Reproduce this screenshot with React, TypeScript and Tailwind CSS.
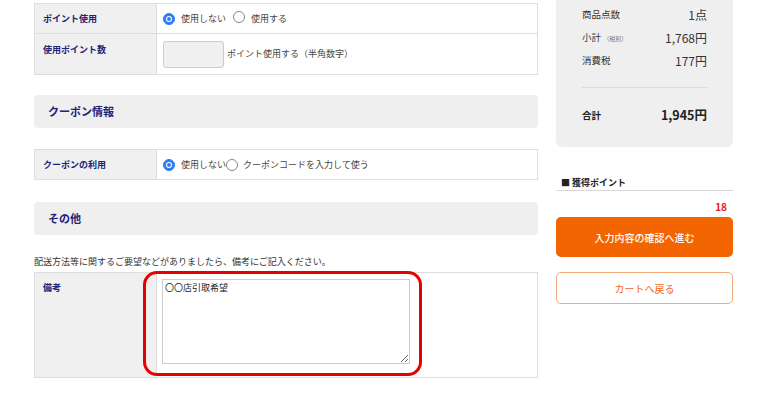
const navy = "text-[#222277]";

const Radio = ({ checked }: { checked?: boolean }) => (
    <span
        className={
            checked
                ? "inline-flex items-center justify-center w-[12px] h-[12px] rounded-full bg-[#2f7df6] border border-[#2f7df6]"
                : "inline-block w-[12px] h-[12px] rounded-full bg-white border border-[#888]"
        }
    >
        {checked && <span className="w-[6px] h-[6px] rounded-full bg-white flex items-center justify-center"><span className="w-[4px] h-[4px] rounded-full bg-[#2f7df6]" /></span>}
    </span>
);

const SectionHeader = ({ title }: { title: string }) => (
    <div className="h-[33px] bg-[#efefef] rounded-[4px] flex items-center pl-[14px]">
        <h2 className={`text-[11px] font-bold ${navy}`}>{title}</h2>
    </div>
);

const App = () => {
    return (
        <div
            className="w-[770px] h-[400px] bg-white overflow-hidden flex gap-[18px] pl-[34px] text-[#333]"
            style={{ fontFamily: '"Noto Sans CJK JP", "Noto Sans", sans-serif' }}
        >
            <div className="w-[504px] pt-[3px]">
                {/* points */}
                <div className="border border-[#dddddd]">
                    <div className="flex h-[30px] border-b border-[#dddddd]">
                        <div className={`w-[122px] bg-[#f0f0f0] border-r border-[#dddddd] pl-[8px] flex items-center text-[9px] font-bold ${navy}`}>
                            ポイント使用
                        </div>
                        <div className="flex-1 flex items-center pl-[6px] text-[9px] text-[#444]">
                            <Radio checked />
                            <span className="ml-[6px]">使用しない</span>
                            <span className="ml-[7px]"><Radio /></span>
                            <span className="ml-[6px]">使用する</span>
                        </div>
                    </div>
                    <div className="flex h-[40px]">
                        <div className={`w-[122px] bg-[#f0f0f0] border-r border-[#dddddd] pl-[8px] pt-[9px] text-[9px] font-bold ${navy}`}>
                            使用ポイント数
                        </div>
                        <div className="flex-1 flex items-center pl-[6px] text-[9px] text-[#444]">
                            <input className="w-[61px] h-[27px] bg-[#f0f0f0] border border-[#cccccc] rounded-[3px]" />
                            <span className="ml-[3px]">ポイント使用する（半角数字）</span>
                        </div>
                    </div>
                </div>

                <div className="mt-[20px]">
                    <SectionHeader title="クーポン情報" />
                </div>

                <div className="mt-[21px] border border-[#dddddd]">
                    <div className="flex h-[29px]">
                        <div className={`w-[122px] bg-[#f0f0f0] border-r border-[#dddddd] pl-[8px] flex items-center text-[9px] font-bold ${navy}`}>
                            クーポンの利用
                        </div>
                        <div className="flex-1 flex items-center pl-[6px] text-[9px] text-[#444]">
                            <Radio checked />
                            <span className="ml-[6px]">使用しない</span>
                            <Radio />
                            <span className="ml-[5px]">クーポンコードを入力して使う</span>
                        </div>
                    </div>
                </div>

                <div className="mt-[22px]">
                    <SectionHeader title="その他" />
                </div>

                <p className="mt-[20px] text-[9px] leading-[14px] text-[#333]">
                    配送方法等に関するご要望などがありましたら、備考にご記入ください。
                </p>

                <div className="mt-[3px] border border-[#dddddd] flex h-[106px]">
                    <div className={`w-[122px] bg-[#f0f0f0] border-r border-[#dddddd] pl-[8px] pt-[8px] text-[9px] font-bold ${navy}`}>
                        備考
                    </div>
                    <div className="flex-1 pl-[5px] pt-[6px]">
                        <div className="relative w-[248px] h-[85px]">
                            <textarea
                                defaultValue="〇〇店引取希望"
                                className="w-full h-full border border-[#cccccc] bg-white text-[9px] leading-[13px] text-[#222] px-[2px] py-[1px] resize"
                            />
                            <div className="absolute left-[-19px] top-[-8px] right-[-12px] bottom-[-12px] border-[3px] border-[#e60000] rounded-[14px]" />
                        </div>
                    </div>
                </div>
            </div>

            {/* summary */}
            <div className="w-[177px]">
                <div className="h-[147px] bg-[#efefef] rounded-b-[6px] px-[26px] pt-[5px] text-[9.5px] text-[#333]">
                    <div className="flex justify-between items-center h-[19px]">
                        <span>商品点数</span>
                        <span className="text-[12px]">1点</span>
                    </div>
                    <div className="flex justify-between items-center h-[23px] mt-[2px]">
                        <span>小計 <span className="text-[6px] text-[#777]">（税別）</span></span>
                        <span className="text-[12px]">1,768円</span>
                    </div>
                    <div className="flex justify-between items-center h-[23px]">
                        <span>消費税</span>
                        <span className="text-[12px]">177円</span>
                    </div>
                    <div className="mt-[15px] border-t border-[#dcdcdc]" />
                    <div className="flex justify-between items-center h-[22px] mt-[16px] font-bold text-[#222]">
                        <span>合計</span>
                        <span className="text-[12.5px]">1,945円</span>
                    </div>
                </div>

                <div className="mt-[30px] pl-[5px] pb-[1px] border-b border-[#d8d8d8] text-[9px] font-bold text-[#222] leading-[12px]">
                    ■ 獲得ポイント
                </div>
                <div className="text-right pr-[6px] mt-[10px] text-[10px] font-bold text-[#e02020] leading-[12px]">18</div>
                <button className="mt-[4px] w-full h-[40px] rounded-[5px] bg-[#f26500] text-white text-[10px] font-medium">
                    入力内容の確認へ進む
                </button>
                <button className="mt-[15px] w-full h-[32px] rounded-[5px] bg-white border border-[#f5a878] text-[#f26a1b] text-[10px]">
                    カートへ戻る
                </button>
            </div>
        </div>
    );
};

export default App;
